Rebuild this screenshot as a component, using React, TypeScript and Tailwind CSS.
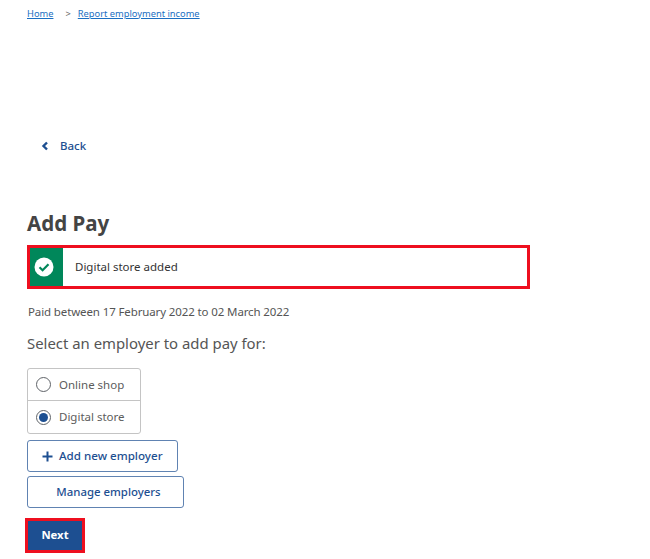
const FONT = "font-['Noto_Sans','Open_Sans',sans-serif]";

function BackChevron() {
  return (
    <svg width="8" height="10" viewBox="0 0 8 10" fill="none">
      <path d="M6 1.5 2.5 5 6 8.5" stroke="#1d4f91" strokeWidth="2.4" />
    </svg>
  );
}

function CheckCircle() {
  return (
    <svg width="20" height="20" viewBox="0 0 20 20">
      <circle cx="10" cy="10" r="9.5" fill="#fff" />
      <path d="M5.5 10.2 8.6 13.2 14.5 7.2" fill="none" stroke="#00875a" strokeWidth="2.2" />
    </svg>
  );
}

function Radio({ label, checked }: { label: string; checked?: boolean }) {
  return (
    <div className="flex h-[32px] items-center pl-[8px]">
      <span className="flex h-[15px] w-[15px] items-center justify-center rounded-full border-[1.5px] border-[#5f6368]">
        {checked && <span className="h-[9px] w-[9px] rounded-full bg-[#1d4f91]" />}
      </span>
      <span className="ml-[8px] text-[11.5px] text-[#5c5c5c]">{label}</span>
    </div>
  );
}

export default function App() {
  return (
    <div className={`${FONT} h-[559px] w-[650px] overflow-hidden bg-white pl-[27px] text-[#444]`}>
      {/* Breadcrumb */}
      <nav className="flex h-[27px] items-center text-[9.3px]">
        <a className="text-[#1b6fc2] underline">Home</a>
        <span className="mr-[7px] ml-[12px] text-[#666]">&gt;</span>
        <a className="text-[#1b6fc2] underline">Report employment income</a>
      </nav>

      {/* Back */}
      <a className="mt-[109px] ml-[14px] flex h-[20px] items-center gap-[11px] text-[11.5px] font-medium text-[#1d4f91]">
        <BackChevron />
        Back
      </a>

      <h1 className="mt-[52px] text-[20.5px] leading-[30px] font-bold text-[#444]">Add Pay</h1>

      {/* Confirmation banner */}
      <div className="mt-[7px] flex h-[44px] w-[503px] border-[3.5px] border-[#ee0f1f]">
        <div className="flex w-[33px] items-center bg-[#00875a] pl-[4px]">
          <CheckCircle />
        </div>
        <p className="ml-[12px] self-center text-[11.5px] text-[#333]">Digital store added</p>
      </div>

      <p className="mt-[14px] ml-px text-[11.5px] leading-[17px] tracking-[-0.12px] text-[#555]">
        Paid between 17 February 2022 to 02 March 2022
      </p>
      <p className="mt-[12px] text-[14.9px] leading-[22px] text-[#555]">
        Select an employer to add pay for:
      </p>

      {/* Employer choice */}
      <div className="mt-[14px] w-[114px] divide-y divide-[#c4c4c4] rounded-[3px] border border-[#c4c4c4]">
        <Radio label="Online shop" />
        <Radio label="Digital store" checked />
      </div>

      <button className="mt-[6px] flex h-[32px] w-[151px] items-center rounded-[3px] border border-[#1d4f91]/70 pl-[14px] text-[11.6px] font-medium text-[#1d4f91]">
        <svg width="11" height="11" viewBox="0 0 11 11" className="mr-[6px]">
          <path d="M5.5 0.5v10M0.5 5.5h10" stroke="#1d4f91" strokeWidth="2" />
        </svg>
        Add new employer
      </button>
      <button className="mt-[4px] block h-[32px] w-[157px] rounded-[3px] border border-[#1d4f91]/70 pl-[6px] text-center text-[11.4px] font-medium text-[#1d4f91]">
        Manage employers
      </button>

      <div className="mt-[10px] flex h-[35px] w-[60px] -translate-x-[2px] border-[3px] border-[#ee0f1f]">
        <button className="w-full bg-[#1d4f91] text-[11.3px] font-bold text-white">Next</button>
      </div>
    </div>
  );
}
